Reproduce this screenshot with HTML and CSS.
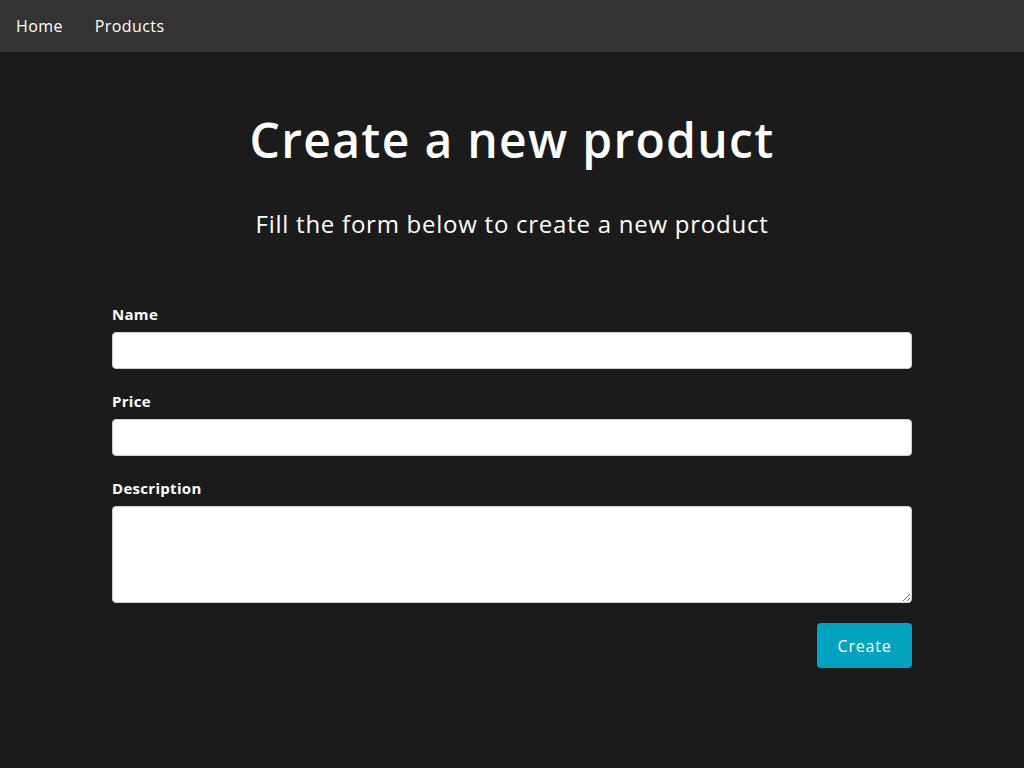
FILE: index.html
```html
<!DOCTYPE html>
<html lang="en">
<head>
<meta charset="utf-8">
<title>Create a new product</title>
<link rel="stylesheet" href="styles.css">
</head>
<body>
<nav class="navbar">
  <a class="nav-link" href="#">Home</a>
  <a class="nav-link" href="#">Products</a>
</nav>
<main class="page">
  <h1 class="title">Create a new product</h1>
  <p class="subtitle">Fill the form below to create a new product</p>
  <form class="form">
    <label class="field">
      <span class="label">Name</span>
      <input class="input" type="text">
    </label>
    <label class="field">
      <span class="label">Price</span>
      <input class="input" type="text">
    </label>
    <label class="field">
      <span class="label">Description</span>
      <textarea class="textarea"></textarea>
    </label>
    <div class="actions">
      <button class="btn" type="button">Create</button>
    </div>
  </form>
</main>
</body>
</html>
```

FILE: styles.css
```css
* { box-sizing: border-box; }
html, body { margin: 0; padding: 0; }
body {
  background: #1b1b1b;
  color: #ffffff;
  font-family: "Open Sans", "DejaVu Sans", sans-serif;
  min-height: 768px;
}
.navbar {
  height: 52px;
  background: #333333;
  display: flex;
  align-items: center;
}
.nav-link {
  color: #ffffff;
  text-decoration: none;
  font-size: 16px;
  letter-spacing: 0.4px;
  padding: 0 16px;
}
.page {
  display: flex;
  flex-direction: column;
  align-items: center;
}
.title {
  margin: 56px 0 0;
  font-size: 48px;
  font-weight: 600;
  line-height: 64px;
  letter-spacing: 1.3px;
}
.subtitle {
  margin: 36px 0 0;
  font-size: 24px;
  line-height: 32px;
  letter-spacing: 0.75px;
}
.form {
  width: 800px;
  margin-top: 62px;
  display: flex;
  flex-direction: column;
}
.field {
  display: flex;
  flex-direction: column;
  margin-bottom: 20px;
}
.label {
  font-size: 15px;
  font-weight: 700;
  line-height: 24px;
  letter-spacing: 0.3px;
  margin-bottom: 6px;
}
.input, .textarea {
  width: 100%;
  background: #ffffff;
  border: 1px solid #cfcfcf;
  border-radius: 4px;
  font: inherit;
}
.input { height: 37px; }
.textarea { height: 97px; resize: vertical; display: block; }
.actions {
  display: flex;
  justify-content: flex-end;
}
.btn {
  background: #00a2c0;
  color: #ffffff;
  border: none;
  border-radius: 4px;
  width: 95px;
  height: 45px;
  font-family: inherit;
  font-size: 16px;
  letter-spacing: 0.8px;
}
```
